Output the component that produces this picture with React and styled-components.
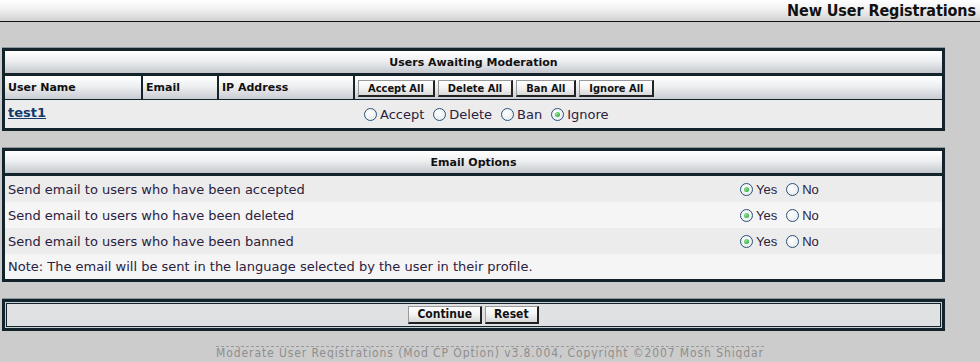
import React from "react";
import styled, { createGlobalStyle } from "styled-components";

const Global = createGlobalStyle`
  html, body {
    margin: 0;
    padding: 0;
    background: #cccccc;
    font-family: "DejaVu Sans", Verdana, sans-serif;
  }
`;

const TopBar = styled.div`
  height: 21px;
  border-bottom: 1px solid #111;
  background: linear-gradient(#ffffff, #f2f2f2 40%, #d2d2d2);
  display: flex;
  justify-content: flex-end;
  align-items: center;
  padding-right: 4px;
`;
const PageTitle = styled.h1`
  margin: 0;
  font-family: "DejaVu Sans Condensed", "DejaVu Sans", sans-serif;
  font-size: 16px;
  font-weight: bold;
  color: #111;
  letter-spacing: -0.1px;
`;
const Content = styled.div`
  width: 943px;
  margin-left: 2px;
  padding-top: 26px;
  display: flex;
  flex-direction: column;
  gap: 17px;
`;
const Panel = styled.div`
  border: 3px solid #12232b;
  box-shadow: 0 -1px 0 #8d999f;
  background: #eeeeee;
  display: flex;
  flex-direction: column;
`;
const TitleRow = styled.div`
  height: 22px;
  background: linear-gradient(#ffffff, #eeeff1 45%, #c4c8ce);
  border-bottom: 3px solid #12232b;
  display: flex;
  align-items: center;
  justify-content: center;
  font-size: 11px;
  font-weight: bold;
  color: #111;
`;
const HeadRow = styled.div`
  height: 23px;
  display: grid;
  grid-template-columns: 136px 74px 134px 1fr;
  background: #12232b;
  gap: 2px;
  border-bottom: 1px solid #12232b;
`;
const HeadCell = styled.div`
  background: linear-gradient(#ffffff, #eeeff1 45%, #c9ccd2);
  display: flex;
  align-items: ${(p) => (p.$top ? "flex-start" : "center")};
  padding: ${(p) => (p.$top ? "3px 0 0 3px" : "0 0 0 3px")};
  font-size: 11px;
  font-weight: bold;
  color: #111;
  gap: 3px;
`;
const SmallButton = styled.button`
  font-family: "DejaVu Sans Condensed", "DejaVu Sans", sans-serif;
  font-size: 11px;
  font-weight: bold;
  color: #111;
  height: 17px;
  padding: 0 ${(p) => p.$pad || 8}px;
  margin-top: 1px;
  border: 1px solid #555;
  border-top-color: #999;
  border-left-color: #999;
  border-bottom: 2px solid #222;
  border-right: 2px solid #222;
  background: linear-gradient(#ffffff, #f3f3f3 50%, #d8d8d8);
  cursor: pointer;
  line-height: 13px;
`;
const UserRow = styled.div`
  height: 28px;
  display: grid;
  grid-template-columns: 355px 1fr;
  align-items: center;
  background: #ececec;
`;
const UserLink = styled.a`
  font-size: 13px;
  font-weight: bold;
  color: #123a6b;
  text-decoration: underline;
  padding-left: 3px;
  margin-top: -4px;
`;
const RadioGroup = styled.div`
  display: flex;
  align-items: center;
  gap: ${(p) => p.$gap || 9}px;
  padding-left: ${(p) => p.$left || 0}px;
`;
const Choice = styled.label`
  display: flex;
  align-items: center;
  gap: 3px;
  font-family: ${(p) =>
    p.$arial ? '"Liberation Sans", Arial, sans-serif' : '"DejaVu Sans", Verdana, sans-serif'};
  font-size: 13px;
  color: #2a2140;
`;
const Radio = styled.span`
  width: 11px;
  height: 11px;
  border: 1px solid #2b5177;
  border-radius: 50%;
  background: radial-gradient(circle at 40% 40%, #ffffff, #e3e6ea);
  display: inline-flex;
  align-items: center;
  justify-content: center;
  &::after {
    content: "";
    width: 5px;
    height: 5px;
    border-radius: 50%;
    background: ${(p) => (p.$on ? "radial-gradient(circle at 35% 35%, #8fe88f, #1f9a2a)" : "transparent")};
  }
`;
const OptionRow = styled.div`
  height: 26px;
  display: grid;
  grid-template-columns: 732px 1fr;
  align-items: center;
  background: ${(p) => (p.$alt ? "#f5f5f5" : "#ececec")};
  padding-left: 3px;
  font-size: 13px;
  color: #2a2140;
`;
const NoteRow = styled(OptionRow)`
  grid-template-columns: 1fr;
  height: 25px;
`;
const ActionPanel = styled(Panel)`
  padding: 1px;
  background: #c9cfd2;
`;
const ActionInner = styled.div`
  border: 1px solid #12232b;
  background: #e0e1e3;
  height: 22px;
  display: flex;
  justify-content: center;
  align-items: center;
  gap: 3px;
`;
const BigButton = styled(SmallButton)`
  font-size: 12px;
  height: 18px;
  margin-top: 0;
`;
const Footer = styled.div`
  width: 980px;
  display: flex;
  justify-content: center;
  padding-top: 15px;
`;
const FooterText = styled.div`
  border-top: 1px dashed #9a9a9a;
  padding-top: 1px;
  font-family: "DejaVu Sans Condensed", "DejaVu Sans", sans-serif;
  font-size: 12px;
  letter-spacing: 0.9px;
  line-height: 11px;
  color: #8e8e8e;
`;

const emailRows = [
  "Send email to users who have been accepted",
  "Send email to users who have been deleted",
  "Send email to users who have been banned",
];

const App = () => (
  <>
    <Global />
    <TopBar>
      <PageTitle>New User Registrations</PageTitle>
    </TopBar>
    <Content>
      <Panel>
        <TitleRow>Users Awaiting Moderation</TitleRow>
        <HeadRow>
          <HeadCell>User Name</HeadCell>
          <HeadCell>Email</HeadCell>
          <HeadCell>IP Address</HeadCell>
          <HeadCell $top>
            <SmallButton $pad={9}>Accept All</SmallButton>
            <SmallButton $pad={9}>Delete All</SmallButton>
            <SmallButton $pad={9}>Ban All</SmallButton>
            <SmallButton $pad={9}>Ignore All</SmallButton>
          </HeadCell>
        </HeadRow>
        <UserRow>
          <UserLink href="#">test1</UserLink>
          <RadioGroup $left={4}>
            <Choice><Radio />Accept</Choice>
            <Choice><Radio />Delete</Choice>
            <Choice><Radio />Ban</Choice>
            <Choice><Radio $on />Ignore</Choice>
          </RadioGroup>
        </UserRow>
      </Panel>

      <Panel>
        <TitleRow>Email Options</TitleRow>
        {emailRows.map((t, i) => (
          <OptionRow key={t} $alt={i % 2 === 1}>
            <span>{t}</span>
            <RadioGroup $gap={9}>
              <Choice $arial><Radio $on />Yes</Choice>
              <Choice $arial><Radio />No</Choice>
            </RadioGroup>
          </OptionRow>
        ))}
        <NoteRow $alt>
          Note: The email will be sent in the language selected by the user in their profile.
        </NoteRow>
      </Panel>

      <ActionPanel>
        <ActionInner>
          <BigButton>Continue</BigButton>
          <BigButton>Reset</BigButton>
        </ActionInner>
      </ActionPanel>
    </Content>
    <Footer>
      <FooterText>
        Moderate User Registrations (Mod CP Option) v3.8.004, Copyright ©2007 Mosh Shigdar
      </FooterText>
    </Footer>
  </>
);

export default App;
